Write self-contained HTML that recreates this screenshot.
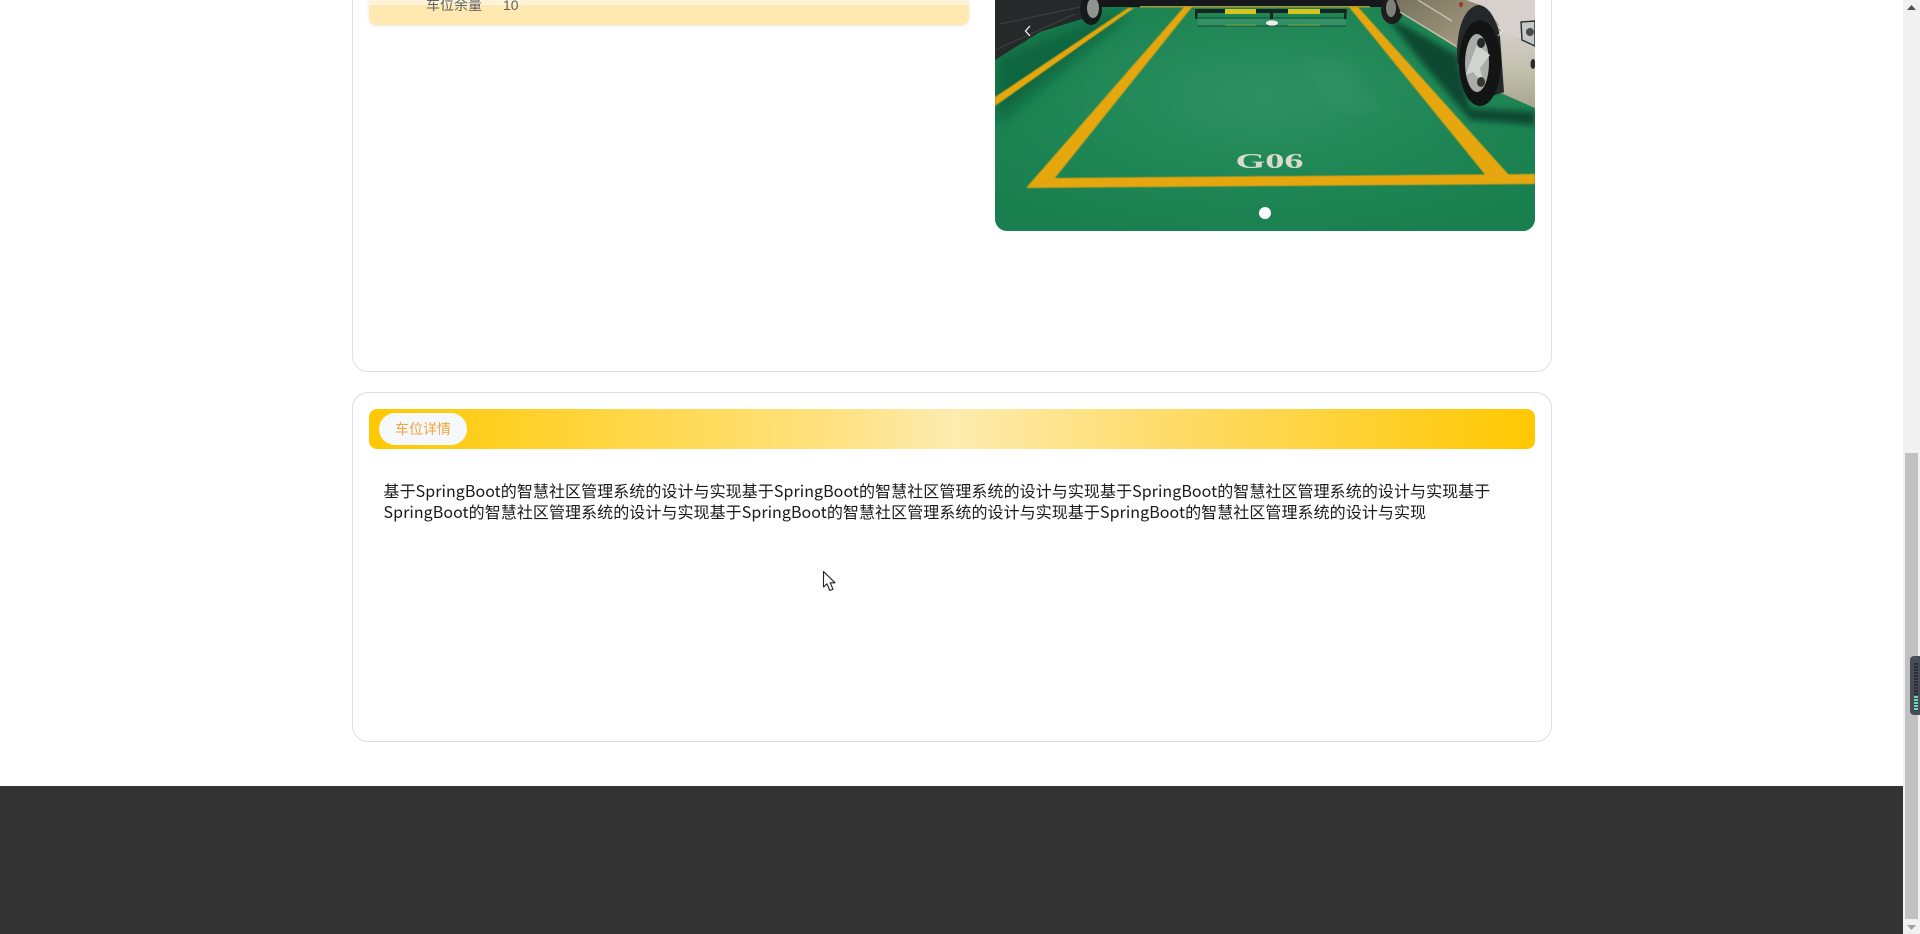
<!DOCTYPE html>
<html lang="zh">
<head>
<meta charset="utf-8">
<title>车位详情</title>
<style>
html,body{margin:0;padding:0;width:1920px;height:934px;overflow:hidden;background:#fff}
body{position:relative;font-family:"Liberation Sans","Noto Sans CJK SC",sans-serif}
.abs{position:absolute}
.card{position:absolute;left:352px;width:1198px;border:1px solid #dedede;border-radius:16px;box-sizing:content-box;background:#fff}
</style>
</head>
<body>
<div class="card" style="top:-40px;height:410px"></div>
<div class="card" style="top:392px;height:348px"></div>

<div class="abs" style="left:369px;top:-60px;width:600px;height:85px;background:#ffe9b1;border-radius:8px;box-shadow:0 1px 3px rgba(0,0,0,.1);overflow:hidden">
  <div class="abs" style="left:0;top:0;width:600px;height:65px;background:#fff4d9"></div>
  <div class="abs" style="left:57px;top:55px;font-size:14px;line-height:20px;color:#606266;font-family:'Liberation Sans','Noto Sans CJK SC',sans-serif">车位余量</div>
  <div class="abs" style="left:134px;top:55px;font-size:14px;line-height:20px;color:#606266">10</div>
</div>

<svg class="abs" style="left:995px;top:0;border-radius:0 0 12px 12px" width="540" height="231" viewBox="995 0 540 231" xmlns="http://www.w3.org/2000/svg">
  <defs>
    <radialGradient id="fl" cx="0.5" cy="0.42" r="0.65">
      <stop offset="0" stop-color="#2d9064"/>
      <stop offset="0.55" stop-color="#1f8655"/>
      <stop offset="1" stop-color="#197f4e"/>
    </radialGradient>
    <filter id="b1"><feGaussianBlur stdDeviation="0.6"/></filter>
    <filter id="b3"><feGaussianBlur stdDeviation="3"/></filter>
    <filter id="b6"><feGaussianBlur stdDeviation="7"/></filter>
    <linearGradient id="door" x1="0" y1="0" x2="1" y2="1">
      <stop offset="0" stop-color="#78735e"/>
      <stop offset="0.5" stop-color="#a59c83"/>
      <stop offset="1" stop-color="#8d8771"/>
    </linearGradient>
    <linearGradient id="fend" x1="0" y1="0" x2="0" y2="1">
      <stop offset="0" stop-color="#d4cfca"/>
      <stop offset="0.5" stop-color="#c4c0ae"/>
      <stop offset="1" stop-color="#a8a591"/>
    </linearGradient>
  </defs>
  <rect x="995" y="0" width="540" height="231" fill="url(#fl)"/>
  <polygon points="995,55 1110,12 1130,12 995,125" fill="#0f6640" filter="url(#b6)"/>
  <polygon points="1385,15 1457,55 1470,108 1535,112 1535,125 1470,120 1420,60" fill="#0a4a30" filter="url(#b3)"/>
  <polygon points="1300,60 1340,60 1380,110 1330,110" fill="#3d9a72" opacity=".3" filter="url(#b6)"/>
  <!-- wall -->
  <rect x="1060" y="0" width="360" height="7" fill="#15171a"/>
  <rect x="1140" y="6" width="230" height="1.5" fill="#a89a3c"/>
  <!-- stripes -->
  <g fill="#e6a60f" filter="url(#b1)">
    <polygon points="1128,8 1134,8 995,106 995,97"/>
    <polygon points="1184,7 1192,7 1055,178 1026,188"/>
    <polygon points="1026,188 1055,178 1535,174 1535,184"/>
    <polygon points="1349,7 1358,7 1509,175 1487,177"/>
  </g>
  <!-- bumper -->
  <rect x="1198" y="18" width="148" height="8" fill="#338f65"/>
  <path d="M1198 18H1346M1198 26H1346" stroke="#14573a" stroke-width="1.2"/>
  <rect x="1195" y="9" width="152" height="4" rx="1.5" fill="#1a2320"/>
  <rect x="1225" y="9" width="31" height="5" fill="#dcc21c"/>
  <rect x="1288" y="9" width="32" height="5" fill="#dcc21c"/>
  <rect x="1195" y="9" width="2.5" height="10" fill="#1a2320"/>
  <rect x="1344" y="9" width="2.5" height="10" fill="#1a2320"/>
  <rect x="1270" y="9" width="3" height="10" fill="#1a2320"/>
  <rect x="1225" y="24" width="31" height="2" fill="#6fa03c" opacity=".6"/>
  <rect x="1288" y="24" width="32" height="2" fill="#6fa03c" opacity=".6"/>
  <ellipse cx="1272" cy="23" rx="6" ry="2.6" fill="#eeeee6"/>
  <!-- left car -->
  <polygon points="995,0 1086,0 1085,18 1040,32 995,60" fill="#25292a"/>
  <path d="M1000 24L1080 7M995 50L1075 14" stroke="#3d4243" stroke-width="1" fill="none"/>
  <ellipse cx="1091" cy="9" rx="11" ry="16" fill="#16191a"/>
  <ellipse cx="1093" cy="8" rx="6" ry="10" fill="#8f9491"/>
  <!-- right car -->
  <ellipse cx="1392" cy="9" rx="11" ry="15" fill="#1b1e1d"/>
  <ellipse cx="1391" cy="8" rx="5" ry="9" fill="#7e817a"/>
  <polygon points="1396,0 1535,0 1535,108 1500,93 1457,48 1401,13" fill="url(#door)"/>
  <path d="M1418 0L1452 21M1400 12L1456 46" stroke="#d9d3bf" stroke-width="1.4" fill="none" opacity=".75"/>
  <polygon points="1466,0 1535,0 1535,45 1503,33 1497,22 1480,5" fill="#d7d0cc"/>
  <polygon points="1497,30 1535,46 1535,108 1504,94" fill="url(#fend)"/>
  <path d="M1457 62C1456 28 1464 8 1478 5C1488 5 1496 18 1500 36L1504 92L1480 100Z" fill="#25282a"/>
  <ellipse cx="1480" cy="63" rx="21" ry="43" fill="#131514"/>
  <ellipse cx="1477" cy="63" rx="12" ry="29" fill="#a9aca8"/>
  <path d="M1477 45L1490 55L1480 68L1484 85L1473 72L1466 75L1471 60Z" fill="#d0d3cf"/>
  <ellipse cx="1481" cy="43" rx="4" ry="5" fill="#26282a"/>
  <ellipse cx="1481" cy="82" rx="4" ry="5" fill="#34362f"/>
  <rect x="1459" y="2" width="4" height="5" rx="2" fill="#a8352f"/>
  <path d="M1521 22L1535 21L1535 46L1522 40Z" fill="#c5c8c8" stroke="#2a2c2c" stroke-width="1.4"/>
  <circle cx="1530" cy="32" r="4" fill="#4a4a48"/>
  <ellipse cx="1533" cy="64" rx="2.5" ry="5" fill="#2c2b28"/>
  <!-- G06 -->
  <text x="1269.5" y="168" text-anchor="middle" font-family="'Liberation Serif',serif" font-weight="700" font-size="21" textLength="68" lengthAdjust="spacingAndGlyphs" fill="#d9dbcc">G06</text>
  <!-- chevrons / dot -->
  <path d="M1030 26L1025.5 31L1030 36" fill="none" stroke="#fff" stroke-width="1.2"/>
  <path d="M1498 26L1502.5 31L1498 36" fill="none" stroke="#fff" stroke-width="1.2" opacity=".65"/>
  <circle cx="1265" cy="213" r="6" fill="#fff"/>
</svg>

<div class="abs" style="left:369px;top:409px;width:1166px;height:40px;border-radius:8px;background:linear-gradient(90deg,#ffc800 0%,#ffdc60 30%,#fee38a 42%,#fdecb0 50%,#fedc6c 68%,#ffc800 100%)"></div>
<div class="abs" style="left:379px;top:413px;width:88px;height:32px;border-radius:16px;background:#f6f9fb;color:#f2a33c;font-size:14px;line-height:32px;text-align:center;font-family:'Liberation Sans','Noto Sans CJK SC',sans-serif">车位详情</div>

<div class="abs" style="left:383.5px;top:480px;width:1130px;font-size:16px;line-height:21px;color:#1a1a1a;letter-spacing:.065px;white-space:nowrap;font-family:'Noto Sans CJK SC','Liberation Sans',sans-serif">基于SpringBoot的智慧社区管理系统的设计与实现基于SpringBoot的智慧社区管理系统的设计与实现基于SpringBoot的智慧社区管理系统的设计与实现基于<br>SpringBoot的智慧社区管理系统的设计与实现基于SpringBoot的智慧社区管理系统的设计与实现基于SpringBoot的智慧社区管理系统的设计与实现</div>

<svg class="abs" style="left:822px;top:570px" width="16" height="23" viewBox="0 0 16 23" xmlns="http://www.w3.org/2000/svg">
  <path d="M1.5 1.5V17L5 13.8L7.8 20.5L11 19.2L8.2 12.8H13Z" fill="#fff" stroke="#222" stroke-width="1.1" stroke-linejoin="round"/>
</svg>

<div class="abs" style="left:0;top:786px;width:1903px;height:148px;background:#333"></div>

<div class="abs" style="left:1903px;top:0;width:17px;height:934px;background:#f1f1f1"></div>
<div class="abs" style="left:1905px;top:453px;width:13px;height:466px;background:#c1c1c1"></div>
<svg class="abs" style="left:1903px;top:0" width="17" height="934" viewBox="0 0 17 934" xmlns="http://www.w3.org/2000/svg">
  <polygon points="8.5,5 13,10 4,10" fill="#505050"/>
  <polygon points="4,925 13,925 8.5,930" fill="#a0a0a0"/>
</svg>

<div class="abs" style="left:1910px;top:656px;width:10px;height:59px;background:#474c57;border-radius:4px 0 0 4px"></div>
<div class="abs" style="left:1914px;top:663px;width:4px;height:48px;background:repeating-linear-gradient(180deg,#2b2e36 0 2px,#4a4e58 2px 3px)"></div>
<div class="abs" style="left:1914px;top:696px;width:4px;height:15px;background:repeating-linear-gradient(180deg,#74d6b4 0 2px,#3f434e 2px 3px)"></div>
</body>
</html>
